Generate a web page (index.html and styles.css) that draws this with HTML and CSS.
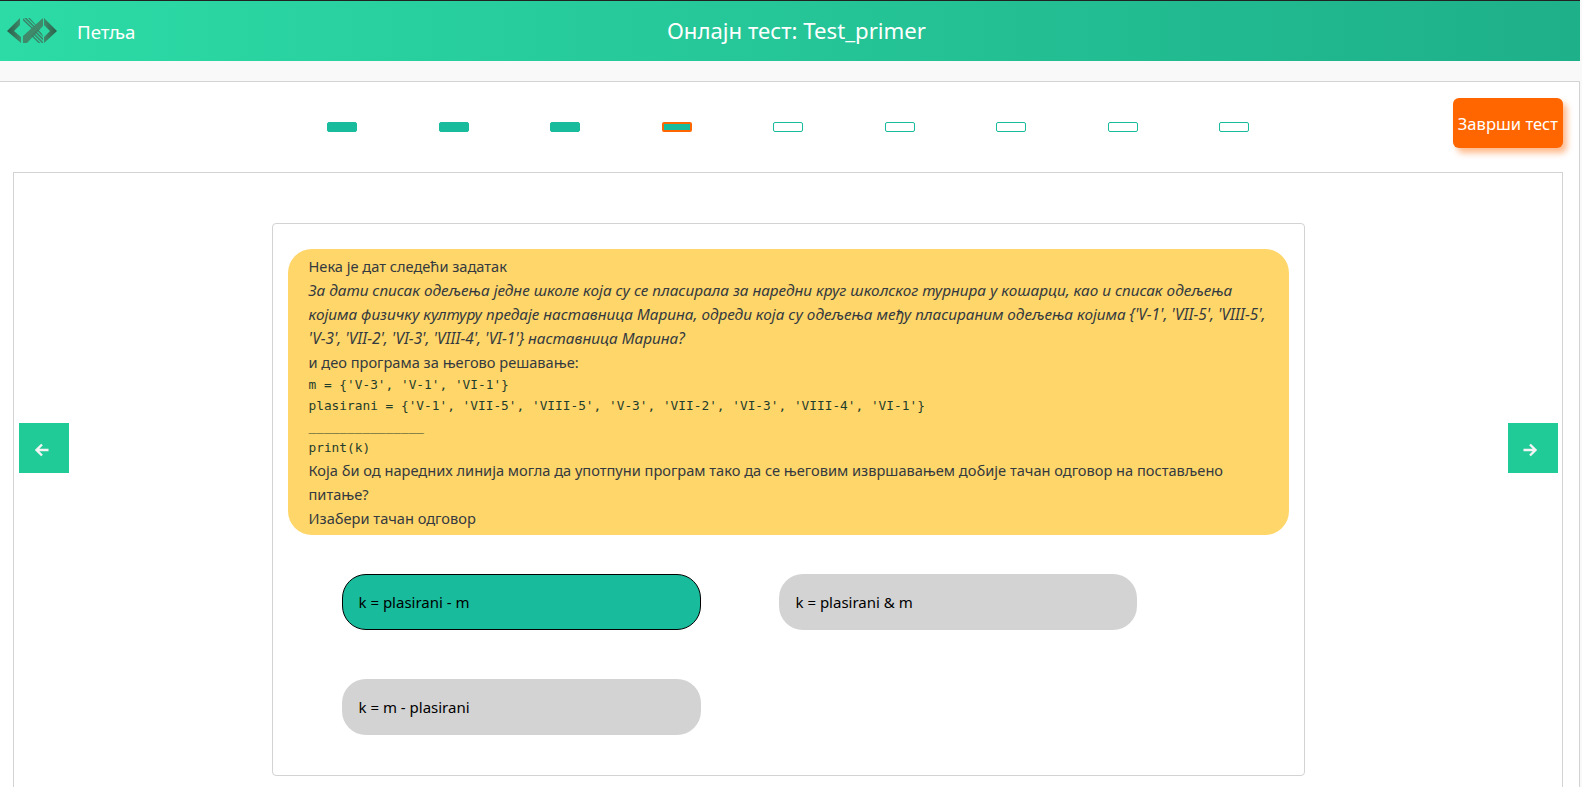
FILE: index.html
```html
<!DOCTYPE html>
<html lang="sr">
<head>
<meta charset="utf-8">
<title>Онлајн тест: Test_primer</title>
<link rel="stylesheet" href="styles.css">
</head>
<body>
<header class="topbar">
  <div class="brand">
    <svg class="logo" viewBox="0 0 50 28" width="50" height="28">
      <defs>
        <linearGradient id="lg" x1="0" y1="0" x2="1" y2="0"><stop offset="0" stop-color="#2a5f49"/><stop offset="1" stop-color="#3f8a6b"/></linearGradient>
        <linearGradient id="rg" x1="1" y1="0" x2="0" y2="0"><stop offset="0" stop-color="#2a5f49"/><stop offset="1" stop-color="#3f8a6b"/></linearGradient>
        <pattern id="hatch" width="2.6" height="2.6" patternUnits="userSpaceOnUse" patternTransform="rotate(45)">
          <rect width="2.6" height="1.4" fill="#3a7a60"/>
        </pattern>
      </defs>
      <path d="M13 1V8L7 14L14 20V26L0 14Z" fill="url(#lg)"/>
      <path d="M37 1L50 14L37 26V20L43 14L37 8Z" fill="url(#rg)"/>
      <path d="M36 1V9L20 26H16V19Z" fill="#3f8a6b"/>
      <path d="M16 1H23L29 8L25 12L16 4ZM28 15L32 11L36 19V26H31L24 19Z" fill="url(#hatch)"/>
    </svg>
    <span class="brand-name">Петља</span>
  </div>
  <h1 class="title">Онлајн тест: Test_primer</h1>
</header>
<div class="strip"></div>
<main class="panel">
  <div class="progress-row">
    <div class="progress">
      <span class="pip done"></span>
      <span class="pip done"></span>
      <span class="pip done"></span>
      <span class="pip current"></span>
      <span class="pip"></span>
      <span class="pip"></span>
      <span class="pip"></span>
      <span class="pip"></span>
      <span class="pip"></span>
    </div>
    <button class="finish">Заврши тест</button>
  </div>
  <section class="stage">
    <button class="nav"><svg viewBox="0 0 16 16" width="16" height="16"><path d="M14.5 8H2.5M8 2.5L2.5 8L8 13.5" fill="none" stroke="#f4f4f4" stroke-width="2.4"/></svg></button>
    <div class="card">
      <div class="question">
        <p>Нека је дат следећи задатак</p>
        <p class="task">За дати списак одељења једне школе која су се пласирала за наредни круг школског турнира у кошарци, као и списак одељења којима физичку културу предаје наставница Марина, одреди која су одељења међу пласираним одељења којима {'V-1', 'VII-5', 'VIII-5', 'V-3', 'VII-2', 'VI-3', 'VIII-4', 'VI-1'} наставница Марина?</p>
        <p>и део програма за његово решавање:</p>
        <pre class="code">m = {'V-3', 'V-1', 'VI-1'}
plasirani = {'V-1', 'VII-5', 'VIII-5', 'V-3', 'VII-2', 'VI-3', 'VIII-4', 'VI-1'}
_______________
print(k)</pre>
        <p>Која би од наредних линија могла да употпуни програм тако да се његовим извршавањем добије тачан одговор на постављено питање?</p>
        <p>Изабери тачан одговор</p>
      </div>
      <div class="answers">
        <button class="answer selected">k = plasirani - m</button>
        <button class="answer">k = plasirani &amp; m</button>
        <button class="answer">k = m - plasirani</button>
      </div>
    </div>
    <button class="nav nav-next"><svg viewBox="0 0 16 16" width="16" height="16"><path d="M1.5 8H13.5M8 2.5L13.5 8L8 13.5" fill="none" stroke="#f4f4f4" stroke-width="2.4"/></svg></button>
  </section>
</main>
</body>
</html>
```

FILE: styles.css
```css
* { box-sizing: border-box; }
html, body { margin: 0; height: 100%; overflow: hidden; }
body {
  width: 1580px;
  background: #f9f9f9;
  font-family: "Noto Sans", "Open Sans", sans-serif;
  color: #343a40;
}
.topbar {
  position: relative;
  height: 61px;
  border-top: 1px solid #222;
  background: linear-gradient(90deg, #2cdba6, #1eb089);
  display: flex;
  align-items: center;
  justify-content: center;
}
.brand {
  position: absolute;
  left: 7px;
  top: 16px;
  display: flex;
  align-items: center;
  gap: 20px;
  color: #fff;
  font-size: 18.7px;
}
.logo { display: block; }
.title { margin: 0 0 1px 13px; font-size: 22.2px; font-weight: 400; color: #fff; }
.strip { height: 20px; }
.panel {
  height: 706px;
  background: #fff;
  border-top: 1px solid #d3d3d3;
  border-right: 1px solid #d3d3d3;
  padding-top: 16px;
}
.progress-row {
  display: flex;
  height: 74px;
  padding-left: 327px;
}
.progress { display: flex; gap: 81.55px; padding-top: 24px; }
.pip {
  width: 30px;
  height: 10px;
  border: 1px solid #18bc9c;
  border-radius: 2px;
  background: #fff;
}
.pip.done { background: #18bc9c; }
.pip.current { background: #18bc9c; border: 2px solid #ff6600; }
.finish {
  margin-left: 203.5px;
  width: 110px;
  height: 50px;
  border: 0;
  border-radius: 6px;
  padding: 0;
  background: #ff6600;
  color: #fff;
  font: 16.6px "Noto Sans", sans-serif;
  box-shadow: 4px 5px 6px rgba(255, 102, 0, .45);
}
.stage {
  width: 1550px;
  height: 640px;
  margin-left: 13px;
  border: 1px solid #d3d3d3;
  padding: 50px 4px 0 5px;
  display: flex;
  align-items: flex-start;
  justify-content: space-between;
}
.nav {
  width: 50px;
  height: 50px;
  margin-top: 200px;
  border: 0;
  padding: 3px 5px 0 0;
  background: #20cb97;
}
.nav-next { padding-right: 7px; }
.nav svg { display: block; margin: 0 auto; }
.card {
  width: 1033px;
  height: 553px;
  background: #fff;
  border: 1px solid #d3d3d3;
  border-radius: 4px;
  padding: 25px 15px 0;
}
.question {
  height: 286px;
  background: #ffd669;
  border-radius: 24px;
  padding: 5px 20.5px;
  font-size: 14.6px;
  line-height: 24px;
}
.question p { margin: 0; }
.question .task { font-style: italic; font-size: 15.33px; font-feature-settings: "locl" 0; }
.code {
  margin: 0;
  font: 12.8px/21px "DejaVu Sans Mono", monospace;
  color: #1f3d2c;
}
.answers {
  display: grid;
  grid-template-columns: 359px 358px;
  column-gap: 78px;
  row-gap: 49px;
  padding: 39px 0 0 54px;
}
.answer {
  height: 56px;
  border: 0;
  border-radius: 24px;
  padding: 0 16.5px;
  background: #d3d3d3;
  color: #000;
  text-align: left;
  font: 15px "Noto Sans", sans-serif;
}
.answer.selected { background: #18bc9c; border: 1px solid #000; padding: 0 15.5px; }
```
